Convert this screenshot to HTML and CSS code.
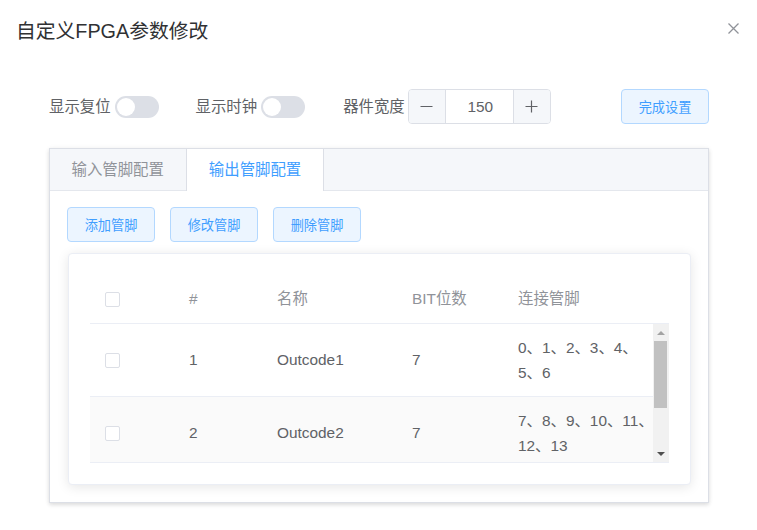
FILE: index.html
```html
<!DOCTYPE html>
<html lang="zh">
<head>
<meta charset="utf-8">
<title>自定义FPGA参数修改</title>
<link rel="stylesheet" href="styles.css">
</head>
<body>
<div class="dialog">
  <div class="dlg-header">
    <span class="dlg-title">自定义FPGA参数修改</span>
    <svg class="dlg-close" width="11" height="11" viewBox="0 0 11 11"><path d="M0.5 0.5L10.5 10.5M10.5 0.5L0.5 10.5" stroke="#909399" stroke-width="1.3" fill="none"/></svg>
  </div>
  <div class="dlg-body">
    <div class="toolbar">
      <span class="lbl">显示复位</span>
      <span class="switch"><span class="knob"></span></span>
      <span class="lbl gap1">显示时钟</span>
      <span class="switch"><span class="knob"></span></span>
      <span class="lbl gap2">器件宽度</span>
      <div class="num-input">
        <span class="num-btn num-dec"><svg width="13" height="13" viewBox="0 0 13 13"><path d="M0.5 6.5H12.5" stroke="#606266" stroke-width="1.2"/></svg></span>
        <span class="num-val">150</span>
        <span class="num-btn num-inc"><svg width="13" height="13" viewBox="0 0 13 13"><path d="M0.5 6.5H12.5M6.5 0.5V12.5" stroke="#606266" stroke-width="1.2"/></svg></span>
      </div>
      <button class="btn btn-done">完成设置</button>
    </div>

    <div class="tabs">
      <div class="tabs-head">
        <div class="tab">输入管脚配置</div>
        <div class="tab active">输出管脚配置</div>
      </div>
      <div class="tabs-content">
        <div class="btn-row">
          <button class="btn">添加管脚</button>
          <button class="btn">修改管脚</button>
          <button class="btn">删除管脚</button>
        </div>
        <div class="card">
          <div class="tbl-head trow">
            <div class="cell"><span class="chk"></span></div>
            <div class="cell">#</div>
            <div class="cell">名称</div>
            <div class="cell">BIT位数</div>
            <div class="cell">连接管脚</div>
          </div>
          <div class="tbl-body">
            <div class="trow brow">
              <div class="cell"><span class="chk"></span></div>
              <div class="cell">1</div>
              <div class="cell">Outcode1</div>
              <div class="cell">7</div>
              <div class="cell">0、1、2、3、4、5、6</div>
            </div>
            <div class="trow brow striped">
              <div class="cell"><span class="chk"></span></div>
              <div class="cell">2</div>
              <div class="cell">Outcode2</div>
              <div class="cell">7</div>
              <div class="cell">7、8、9、10、11、12、13</div>
            </div>
            <div class="scrollbar">
              <div class="sb-btn"><span class="arr-up"></span></div>
              <div class="sb-track"><div class="sb-thumb"></div></div>
              <div class="sb-btn"><span class="arr-down"></span></div>
            </div>
          </div>
        </div>
      </div>
    </div>
  </div>
</div>
</body>
</html>
```

FILE: styles.css
```css
* { box-sizing: border-box; }
html, body { margin: 0; padding: 0; background: #fff; }
body {
  font-family: "Liberation Sans", "Noto Sans CJK SC", sans-serif;
  font-size: 15.4px;
  color: #606266;
}
.dialog { width: 757px; height: 530px; background: #fff; }

.dlg-header {
  display: flex;
  justify-content: space-between;
  align-items: flex-start;
  padding: 18px 18px 0 16px;
  height: 44px;
}
.dlg-title { font-size: 19.8px; line-height: 26px; color: #303133; }
.dlg-close { margin-top: 5px; display: block; }

.dlg-body { padding: 45px 48px 0 49px; }

.toolbar { display: flex; align-items: center; height: 35px; }
.lbl { line-height: 22px; white-space: nowrap; }
.gap1 { margin-left: 37px; }
.gap2 { margin-left: 38px; }
.switch {
  margin-left: 4px;
  width: 44px; height: 22px;
  border-radius: 11px;
  background: #dcdfe6;
  display: flex; align-items: center;
  padding-left: 2px;
}
.knob { width: 18px; height: 18px; border-radius: 50%; background: #fff; display: block; }

.num-input {
  margin-left: 3px;
  width: 143px; height: 35px;
  border: 1px solid #dcdfe6;
  border-radius: 4px;
  display: flex;
  overflow: hidden;
}
.num-btn {
  width: 37px;
  background: #f5f7fa;
  display: flex; align-items: center; justify-content: center;
}
.num-btn svg { display: block; }
.num-dec { border-right: 1px solid #dcdfe6; }
.num-inc { border-left: 1px solid #dcdfe6; }
.num-val { flex: 1; display: flex; align-items: center; justify-content: center; color: #606266; padding-left: 2px; }

.btn {
  font-family: "Liberation Sans", "Noto Sans CJK SC", sans-serif;
  font-size: 13.2px;
  width: 88px; height: 35px;
  background: #ecf5ff;
  border: 1px solid #b3d8ff;
  color: #409eff;
  border-radius: 4px;
  padding: 0;
  cursor: pointer;
}
.btn-done { margin-left: auto; }

.tabs {
  margin-top: 24px;
  border: 1px solid #dcdfe6;
  box-shadow: 0 2px 4px rgba(0,0,0,.12), 0 0 6px rgba(0,0,0,.04);
  background: #fff;
}
.tabs-head {
  display: flex;
  background: #f5f7fa;
  border-bottom: 1px solid #e4e7ed;
  height: 42px;
}
.tab {
  height: 41px;
  line-height: 41px;
  padding: 0 21.5px;
  color: #909399;
  white-space: nowrap;
  border-left: 1px solid transparent;
  border-right: 1px solid transparent;
}
.tab:first-child { border-left: none; }
.tab.active {
  color: #409eff;
  background: #fff;
  border-left-color: #dcdfe6;
  border-right-color: #dcdfe6;
  height: 42px;
  margin-right: -1px;
}

.tabs-content { padding: 16px 17px 17px 18px; }
.btn-row { display: flex; gap: 15px; margin-left: -1px; }

.card {
  margin-top: 11px;
  border: 1px solid #ebeef5;
  border-radius: 4px;
  box-shadow: 0 2px 12px 0 rgba(0,0,0,.1);
  background: #fff;
  padding: 21px;
}

.trow {
  display: grid;
  grid-template-columns: 84px 88px 135px 106px 1fr;
  align-items: center;
}
.cell { padding-left: 15px; line-height: 25.3px; }
.cell:last-child { padding-right: 10px; }
.tbl-head { height: 49px; border-bottom: 1px solid #ebeef5; color: #909399; }
.tbl-head .cell { white-space: nowrap; }

.chk {
  display: block;
  width: 15px; height: 15px;
  border: 1px solid #dcdfe6;
  border-radius: 2px;
  background: #fff;
}

.tbl-body {
  position: relative;
  height: 139px;
  overflow: hidden;
  border-bottom: 1px solid #ebeef5;
}
.brow { height: 73px; border-bottom: 1px solid #ebeef5; }
.striped { background: #fafafa; }

.scrollbar {
  position: absolute;
  top: 0; right: 0; bottom: 0;
  width: 16px;
  background: #f1f1f1;
  display: flex; flex-direction: column;
}
.sb-btn { height: 17px; display: flex; align-items: center; justify-content: center; }
.sb-track { flex: 1; }
.sb-thumb { height: 67px; margin: 0 2px 0 1px; background: #c1c1c1; }
.arr-up, .arr-down { width: 0; height: 0; border-left: 4px solid transparent; border-right: 4px solid transparent; }
.arr-up { border-bottom: 4px solid #a3a3a3; }
.arr-down { border-top: 4px solid #505050; }
```
